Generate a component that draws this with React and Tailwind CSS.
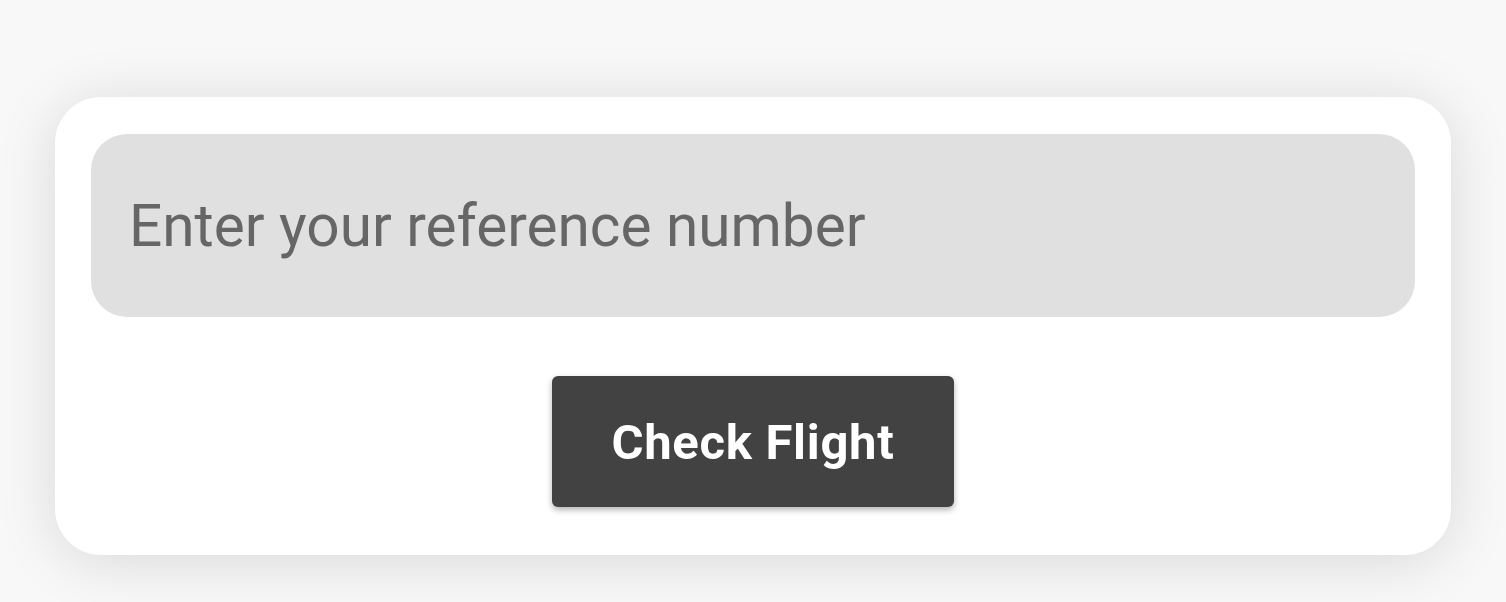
export default function App() {
  return (
    <div className="min-h-[602px] w-full bg-[#f8f8f8] px-[55px] pt-[97px] pb-[47px] font-['Roboto',sans-serif]">
      <div className="rounded-[46px] bg-white px-[36px] pt-[37px] pb-[48px] shadow-[0_6px_60px_rgba(0,0,0,0.13)]">
        <input
          type="text"
          placeholder="Enter your reference number"
          className="block h-[183px] w-full rounded-[36px] bg-[#e0e0e0] px-[38px] text-[58.5px] text-[#222] outline-none placeholder:text-[#666]"
        />
        <div className="mt-[59px] flex justify-center">
          <button className="h-[131px] w-[402px] rounded-[6px] bg-[#424242] pt-[3px] text-[49px] font-bold tracking-[0.7px] text-white shadow-[0_3px_6px_rgba(0,0,0,0.3)]">
            Check Flight
          </button>
        </div>
      </div>
    </div>
  );
}
